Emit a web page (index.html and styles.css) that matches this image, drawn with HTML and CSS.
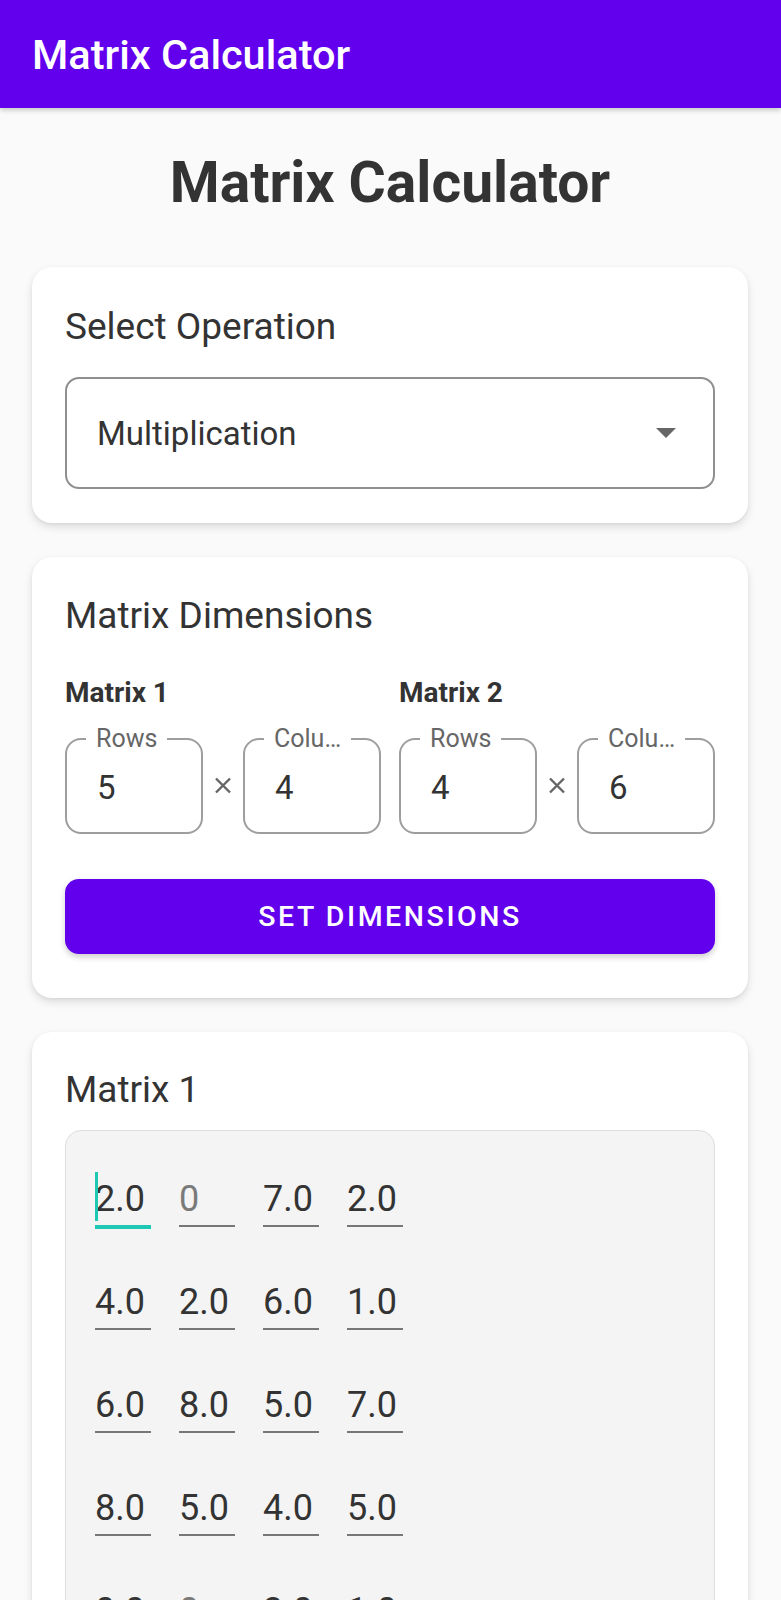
FILE: index.html
```html
<!DOCTYPE html>
<html lang="en">
<head>
<meta charset="utf-8">
<title>Matrix Calculator</title>
<link rel="stylesheet" href="styles.css">
</head>
<body>
<header class="appbar">Matrix Calculator</header>
<main class="content">
  <h1 class="heading">Matrix Calculator</h1>

  <section class="card card-op">
    <h2 class="card-title">Select Operation</h2>
    <div class="dropdown">
      <span class="dropdown-value">Multiplication</span>
      <svg class="dropdown-arrow" width="20" height="10" viewBox="0 0 20 10"><path d="M0 0 L20 0 L10 10 Z" fill="#666"/></svg>
    </div>
  </section>

  <section class="card card-dims">
    <h2 class="card-title">Matrix Dimensions</h2>
    <div class="dims">
      <div class="dim-group">
        <div class="dim-label">Matrix 1</div>
        <div class="dim-fields">
          <fieldset class="field"><legend>Rows</legend><div class="field-value">5</div></fieldset>
          <div class="times"><svg width="18" height="17" viewBox="0 0 18 17"><path d="M2 1.5 L16 15.5 M16 1.5 L2 15.5" stroke="#666" stroke-width="2.4"/></svg></div>
          <fieldset class="field"><legend>Colu…</legend><div class="field-value">4</div></fieldset>
        </div>
      </div>
      <div class="dim-group">
        <div class="dim-label">Matrix 2</div>
        <div class="dim-fields">
          <fieldset class="field"><legend>Rows</legend><div class="field-value">4</div></fieldset>
          <div class="times"><svg width="18" height="17" viewBox="0 0 18 17"><path d="M2 1.5 L16 15.5 M16 1.5 L2 15.5" stroke="#666" stroke-width="2.4"/></svg></div>
          <fieldset class="field"><legend>Colu…</legend><div class="field-value">6</div></fieldset>
        </div>
      </div>
    </div>
    <button class="btn-primary" type="button">SET DIMENSIONS</button>
  </section>

  <section class="card card-matrix">
    <h2 class="card-title">Matrix 1</h2>
    <div class="matrix-box">
      <div class="matrix-row">
        <div class="cell cell-focused"><span class="cursor"></span>2.0</div>
        <div class="cell cell-hint">0</div>
        <div class="cell">7.0</div>
        <div class="cell">2.0</div>
      </div>
      <div class="matrix-row">
        <div class="cell">4.0</div>
        <div class="cell">2.0</div>
        <div class="cell">6.0</div>
        <div class="cell">1.0</div>
      </div>
      <div class="matrix-row">
        <div class="cell">6.0</div>
        <div class="cell">8.0</div>
        <div class="cell">5.0</div>
        <div class="cell">7.0</div>
      </div>
      <div class="matrix-row">
        <div class="cell">8.0</div>
        <div class="cell">5.0</div>
        <div class="cell">4.0</div>
        <div class="cell">5.0</div>
      </div>
      <div class="matrix-row">
        <div class="cell">0.0</div>
        <div class="cell cell-hint">0</div>
        <div class="cell">3.0</div>
        <div class="cell">1.0</div>
      </div>
    </div>
  </section>
</main>
</body>
</html>
```

FILE: styles.css
```css
* { box-sizing: border-box; }

html, body {
  margin: 0;
  padding: 0;
}

body {
  background: #fafafa;
  font-family: Roboto, "Noto Sans", "Liberation Sans", sans-serif;
  color: #333;
}

.appbar {
  height: 108px;
  background: #6200ee;
  color: #fff;
  font-size: 41.5px;
  font-weight: 500;
  display: flex;
  align-items: center;
  padding-left: 32px;
  box-shadow: 0 2px 5px rgba(0, 0, 0, 0.22);
  position: relative;
  z-index: 1;
}

.content {
  padding: 0 33px 0 32px;
}

.heading {
  margin: 41px 0 0;
  font-size: 57px;
  line-height: 67px;
  font-weight: 700;
  text-align: center;
  color: #333;
}

.card {
  background: #fff;
  border-radius: 20px;
  box-shadow: 0 4px 9px rgba(0, 0, 0, 0.12), 0 1px 3px rgba(0, 0, 0, 0.05);
  padding: 40px 33px 34px;
  margin-top: 34px;
}

.card-op {
  margin-top: 51px;
}

.card-title {
  margin: 0;
  font-size: 37px;
  line-height: 40px;
  font-weight: 400;
  color: #333;
}

.dropdown {
  margin-top: 30px;
  height: 112px;
  border: 2px solid #8f8f8f;
  border-radius: 14px;
  display: flex;
  align-items: center;
  justify-content: space-between;
  padding: 0 37px 0 30px;
}

.dropdown-value {
  font-size: 33px;
  color: #333;
}

.card-dims {
  padding-top: 39px;
  padding-bottom: 44px;
}

.dims {
  margin-top: 41px;
  display: grid;
  grid-template-columns: 1fr 1fr;
  column-gap: 18px;
}

.dim-label {
  font-size: 28px;
  line-height: 32px;
  font-weight: 700;
  color: #333;
}

.dim-fields {
  margin-top: 17px;
  display: grid;
  grid-template-columns: 1fr 40px 1fr;
  align-items: end;
}

.field {
  margin: 0;
  min-width: 0;
  border: 2px solid #9e9e9e;
  border-radius: 16px;
  padding: 16px 10px 24px 30px;
}

.field legend {
  font-size: 25px;
  line-height: 26px;
  color: #666;
  padding: 0 10px;
  margin-left: -11px;
}

.field-value {
  font-size: 33px;
  line-height: 40px;
  color: #333;
}

.times {
  height: 96px;
  display: flex;
  align-items: center;
  justify-content: center;
}

.times svg {
  display: block;
  margin-top: -2px;
}

.btn-primary {
  display: block;
  width: 100%;
  margin-top: 45px;
  height: 75px;
  border: none;
  border-radius: 14px;
  background: #6200ee;
  color: #fff;
  font-family: Roboto, "Noto Sans", "Liberation Sans", sans-serif;
  font-size: 28.5px;
  font-weight: 500;
  letter-spacing: 0.09em;
  box-shadow: 0 3px 6px rgba(0, 0, 0, 0.2);
}

.card-matrix {
  padding-top: 38px;
  padding-bottom: 60px;
}

.matrix-box {
  margin-top: 20px;
  background: #f4f4f4;
  border: 1px solid #dedede;
  border-radius: 16px;
  padding: 46px 28px 40px 29px;
  display: flex;
  flex-direction: column;
  gap: 53px;
}

.matrix-row {
  display: flex;
  gap: 28px;
  align-items: flex-start;
}

.cell {
  position: relative;
  width: 56px;
  font-size: 36px;
  line-height: 44px;
  color: #333;
  padding-bottom: 4px;
  border-bottom: 2px solid #777;
}

.cell-hint {
  color: #7a7a7a;
}

.cell-focused {
  border-bottom: 4px solid #1fc8b4;
  margin-bottom: -2px;
}

.cursor {
  position: absolute;
  left: 0;
  top: -5px;
  width: 3px;
  height: 49px;
  background: #1fc8b4;
}
```
